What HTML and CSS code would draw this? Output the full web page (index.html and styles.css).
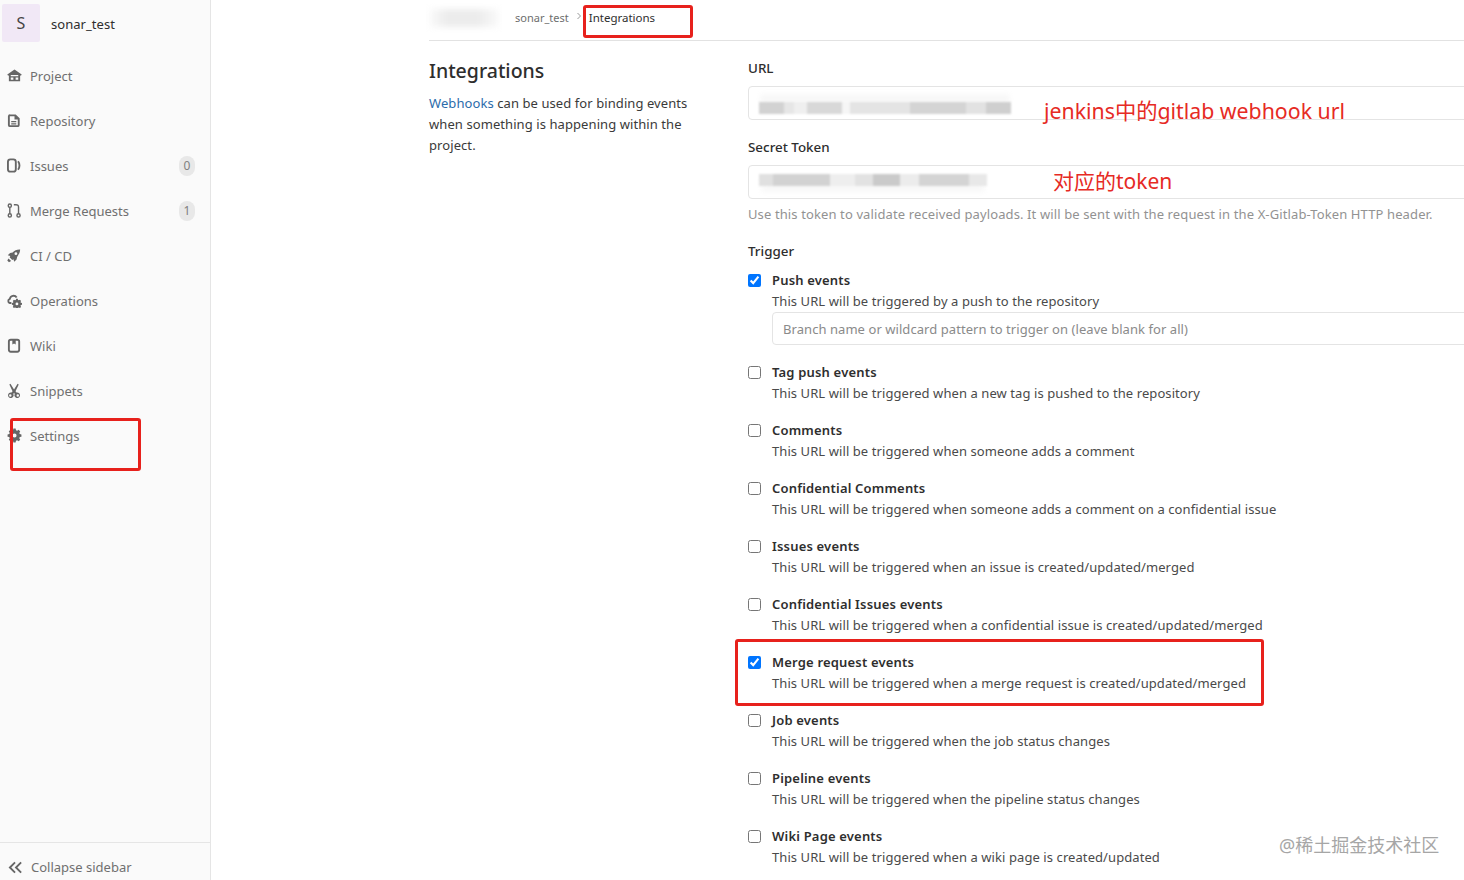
FILE: index.html
```html
<!DOCTYPE html>
<html lang="en">
<head>
<meta charset="utf-8">
<title>Integrations</title>
<link rel="stylesheet" href="styles.css">
</head>
<body>
<div class="page">
  <aside class="sidebar">
    <div class="brand">
      <div class="avatar">S</div>
      <div class="brand-name">sonar_test</div>
    </div>
    <nav class="nav">
      <a class="nav-item"><svg class="icon" viewBox="0 0 16 16"><path d="M8 1.500 0.300 6.800 1.200 8.300 2 7.800V14h12V7.800l.8.5.9-1.500L8 1.500zM4 7.400h8V8.900H4V7.400zM4 10.200h2.800v2.300H4v-2.300zm5.200 0H12v2.300H9.200v-2.300z" fill-rule="evenodd"/></svg><span>Project</span></a>
      <a class="nav-item"><svg class="icon" viewBox="0 0 16 16"><path d="M3.500 1.500h5.800L13.500 5.700V13a2.200 2.200 0 0 1-2.200 2H3.200A2.200 2.200 0 0 1 1 13V3.500a2.200 2.200 0 0 1 2.500-2zm-.5 2v9.500h8.500V6.800H8V3.500H3zM4.500 8.400h5.400v1.500H4.500V8.400zm0 2.400h5.400v1.500H4.500v-1.500z" fill-rule="evenodd"/></svg><span>Repository</span></a>
      <a class="nav-item"><svg class="icon" viewBox="0 0 16 16"><rect class="line" x="1" y="1.500" width="8.400" height="13" rx="2.600"/><path class="line" d="M11.800 3.500c2 2.500 2 6.500 0 9"/></svg><span>Issues</span><b class="count">0</b></a>
      <a class="nav-item"><svg class="icon" viewBox="0 0 16 16"><g class="thin"><circle cx="3" cy="2.800" r="1.700"/><circle cx="3" cy="13.200" r="1.700"/><circle cx="12.300" cy="13.200" r="1.700"/><path d="M3 4.500v7M12.300 11.500V4.500c0-1.700-1-2.700-2.700-2.700H7.300"/></g></svg><span>Merge Requests</span><b class="count">1</b></a>
      <a class="nav-item"><svg class="icon" viewBox="0 0 16 16"><path d="M14 1.500c-3.300-.2-6 .9-8 3.200L3.300 5.300.8 7.800l2.700.8-.7 1.300 2.800 2.800 1.300-.7.800 2.700 2.500-2.500.6-2.700C12.100 7.500 14.200 4.800 14 1.500zM9.500 4.500a1.500 1.500 0 1 1 0 3 1.500 1.500 0 0 1 0-3zM1.600 11.100l2.800 2.800-2.300 1.300-1.800-1.800 1.300-2.300z" fill-rule="evenodd"/></svg><span>CI / CD</span></a>
      <a class="nav-item"><svg class="icon" viewBox="0 0 16 16"><path class="line" d="M10.300 4.800A4 4 0 0 0 3 6.300 2.300 2.300 0 0 0 3 10.700h1.700"/><path d="M9.700 6.200h1.800l.3 1.200.9.400 1.100-.6 1.200 1.200-.6 1.100.4.900 1.200.3v1.800l-1.200.3-.4.900.6 1.100-1.200 1.200-1.100-.6-.9.400-.3 1.200H9.700l-.3-1.200-.9-.4-1.100.6-1.200-1.200.6-1.100-.4-.9-1.200-.3V10.700l1.200-.3.4-.9-.6-1.100 1.200-1.200 1.100.6.900-.4.300-1.200zM10.600 10.100a1.500 1.500 0 1 0 0 3 1.500 1.500 0 0 0 0-3z" fill-rule="evenodd"/></svg><span>Operations</span></a>
      <a class="nav-item"><svg class="icon" viewBox="0 0 16 16"><rect class="line" x="2" y="1.800" width="11" height="12.800" rx="2"/><path d="M5.700 1.500h3.600v5.500L7.500 5.800 5.700 7z"/></svg><span>Wiki</span></a>
      <a class="nav-item"><svg class="icon" viewBox="0 0 16 16"><path d="M3.700 .8 7.500 7 11.300 .8l1.200.9L9.100 8.800l1 1.400a3 3 0 1 1-1.800 1.400l-.8-1.300-.8 1.300a3 3 0 1 1-1.800-1.400l1-1.400L2.500 1.700 3.700 .8zM3.500 12a1.300 1.300 0 1 0 0 2.600 1.300 1.300 0 0 0 0-2.600zm8 0a1.300 1.300 0 1 0 0 2.600 1.300 1.300 0 0 0 0-2.600z" fill-rule="evenodd"/></svg><span>Snippets</span></a>
      <a class="nav-item"><svg class="icon" viewBox="0 0 16 16"><path d="M6.800 .6h2.400l.4 1.800 1.200.5 1.600-1 1.700 1.700-1 1.600.5 1.200 1.800.4v2.400l-1.800.4-.5 1.200 1 1.600-1.700 1.700-1.600-1-1.200.5-.4 1.800H6.800l-.4-1.800-1.200-.5-1.600 1-1.700-1.700 1-1.600-.5-1.200L.6 9.200V6.800l1.800-.4.5-1.200-1-1.600L3.600 1.900l1.600 1 1.200-.5.400-1.800zM8 5.800a2.200 2.200 0 1 0 0 4.400A2.200 2.200 0 0 0 8 5.800z" fill-rule="evenodd"/></svg><span>Settings</span></a>
    </nav>
    <div class="collapse">
      <svg class="collapse-icon" viewBox="0 0 16 16"><path d="M7.500 2.500 2 8l5.500 5.500M14 2.500 8.500 8l5.500 5.500"/></svg>
      <span>Collapse sidebar</span>
    </div>
  </aside>
  <main class="main">
    <div class="crumbs">
      <span class="blur blur-crumb"></span>
      <span class="crumb-link">sonar_test</span>
      <svg class="crumb-sep" viewBox="0 0 8 8"><path d="M2.500 1 5.500 4l-3 3"/></svg>
      <span class="crumb-current">Integrations</span>
    </div>
    <div class="columns">
      <section class="intro">
        <h1>Integrations</h1>
        <p><a class="link">Webhooks</a> can be used for binding events when something is happening within the project.</p>
      </section>
      <form class="form">
        <label class="field-label">URL</label>
        <div class="input input-url"><span class="blur blur-url"></span></div>
        <label class="field-label label-token">Secret Token</label>
        <div class="input input-token"><span class="blur blur-token"></span></div>
        <p class="help">Use this token to validate received payloads. It will be sent with the request in the X-Gitlab-Token HTTP header.</p>
        <label class="field-label label-trigger">Trigger</label>
        <div class="trigger trigger-push"><input type="checkbox" checked><div><strong>Push events</strong><p>This URL will be triggered by a push to the repository</p><input class="branch" type="text" placeholder="Branch name or wildcard pattern to trigger on (leave blank for all)"></div></div>
        <div class="trigger"><input type="checkbox"><div><strong>Tag push events</strong><p>This URL will be triggered when a new tag is pushed to the repository</p></div></div>
        <div class="trigger"><input type="checkbox"><div><strong>Comments</strong><p>This URL will be triggered when someone adds a comment</p></div></div>
        <div class="trigger"><input type="checkbox"><div><strong>Confidential Comments</strong><p>This URL will be triggered when someone adds a comment on a confidential issue</p></div></div>
        <div class="trigger"><input type="checkbox"><div><strong>Issues events</strong><p>This URL will be triggered when an issue is created/updated/merged</p></div></div>
        <div class="trigger"><input type="checkbox"><div><strong>Confidential Issues events</strong><p>This URL will be triggered when a confidential issue is created/updated/merged</p></div></div>
        <div class="trigger"><input type="checkbox" checked><div><strong>Merge request events</strong><p>This URL will be triggered when a merge request is created/updated/merged</p></div></div>
        <div class="trigger"><input type="checkbox"><div><strong>Job events</strong><p>This URL will be triggered when the job status changes</p></div></div>
        <div class="trigger"><input type="checkbox"><div><strong>Pipeline events</strong><p>This URL will be triggered when the pipeline status changes</p></div></div>
        <div class="trigger"><input type="checkbox"><div><strong>Wiki Page events</strong><p>This URL will be triggered when a wiki page is created/updated</p></div></div>
      </form>
    </div>
  </main>
  <div class="mark mark-settings"></div>
  <div class="mark mark-crumb"></div>
  <div class="mark mark-merge"></div>
  <div class="note note-url">jenkins中的gitlab webhook url</div>
  <div class="note note-token">对应的token</div>
  <div class="watermark">@稀土掘金技术社区</div>
</div>
</body>
</html>
```
FILE: styles.css
```css
* { box-sizing: border-box; }
html, body { margin: 0; height: 100%; overflow: hidden; background: #fff; }
body { font-family: "Noto Sans", "Noto Sans CJK SC", sans-serif; font-size: 14px; color: #2e2e2e; }
.page { position: relative; display: flex; width: 1464px; height: 880px; overflow: hidden; }

.sidebar { flex: none; width: 211px; height: 880px; display: flex; flex-direction: column; background: #fafafa; border-right: 1px solid #e5e5e5; }
.brand { flex: none; height: 53px; display: flex; align-items: flex-start; padding: 4px 0 0 2px; }
.avatar { width: 38px; height: 38px; display: flex; align-items: center; justify-content: center; background: #f1e8f6; color: #444; font-size: 16px; border-radius: 2px; }
.brand-name { margin: 10px 0 0 11px; font-size: 13px; letter-spacing: .05px; line-height: 20px; color: #2e2e2e; }
.nav { flex: 1; display: flex; flex-direction: column; }
.nav-item { height: 45px; display: flex; align-items: center; padding: 0 15px 0 7px; color: #707070; font-size: 13px; }
.icon { flex: none; width: 15px; height: 15px; margin-right: 8px; fill: #666; }
.line { fill: none; stroke: #666; stroke-width: 2; }
.thin { fill: none; stroke: #666; stroke-width: 1.500; }
.count { margin-left: auto; width: 16px; height: 20px; display: flex; align-items: center; justify-content: center; border-radius: 8px; background: #e8e8e8; color: #808080; font-size: 12px; font-weight: 400; }
.collapse { flex: none; height: 38px; border-top: 1px solid #e5e5e5; display: flex; align-items: center; padding: 11px 0 0 8px; color: #707070; font-size: 13px; }
.collapse-icon { width: 15px; height: 15px; margin-right: 8px; fill: none; stroke: #666; stroke-width: 2; }

.main { flex: 1; min-width: 0; padding-left: 218px; }
.crumbs { height: 41px; display: flex; align-items: flex-start; border-bottom: 1px solid #e2e2e2; padding-top: 9px; font-size: 11px; line-height: 18px; color: #6e6e6e; }
.blur { display: block; }
.blur-crumb { width: 70px; height: 18px; margin: 0 16px 0 0; background: linear-gradient(90deg, #fbfbfb, #ececec 25% 70%, #fafafa); filter: blur(3px); }
.crumb-sep { width: 8px; height: 8px; margin: 3px 6px 0 6px; fill: none; stroke: #999; stroke-width: 1; }
.crumb-current { color: #2e2e2e; font-size: 11.500px; }

.columns { display: flex; }
.intro { flex: none; width: 319px; padding-top: 15px; }
h1 { margin: 0 0 7px; font-size: 19.500px; font-weight: 500; line-height: 30px; color: #2e2e2e; }
.intro p { margin: 0; width: 265px; font-size: 13px; letter-spacing: .08px; line-height: 21px; color: #3a3a3a; }
.link { color: #2b6cab; }

.form { flex: 1; min-width: 0; margin-right: -20px; padding-top: 17px; }
.field-label { display: block; font-size: 13.400px; line-height: 20px; font-weight: 500; color: #2e2e2e; margin-bottom: 8px; }
.input { height: 34px; border: 1px solid #e4e4e4; border-radius: 4px; padding-left: 10px; }
.input-url { padding-top: 15px; }
.input-token { padding-top: 8px; }
.blur-url { width: 252px; height: 12px; filter: blur(1px); box-shadow: 0 -9px 5px -1px #f8f8f8; background: linear-gradient(90deg, #d2d2d2 0 10%, #e6e6e6 10% 14%, #efefef 14% 19%, #d8d8d8 19% 33%, #f6f6f6 33% 36%, #e4e4e4 36% 60%, #d4d4d4 60% 82%, #e2e2e2 82% 90%, #cfcfcf 90% 100%); }
.blur-token { width: 228px; height: 12px; filter: blur(1px); box-shadow: 0 8px 5px -2px #f8f8f8; background: linear-gradient(90deg, #e0e0e0 0 6%, #d2d2d2 6% 31%, #eeeeee 31% 42%, #e2e2e2 42% 50%, #cacaca 50% 62%, #ececec 62% 70%, #d4d4d4 70% 92%, #e8e8e8 92% 100%); }
.label-token { margin-top: 17px; }
.help { margin: 5px 0 0; font-size: 13px; letter-spacing: .115px; line-height: 20px; color: #929292; }
.label-trigger { margin-top: 17px; margin-bottom: 9px; }

.trigger { display: flex; margin-bottom: 16px; }
.trigger-push { margin-bottom: 17px; }
.trigger input[type="checkbox"] { flex: none; margin: 4px 11px 0 0; width: 13px; height: 13px; }
.trigger > div { flex: 1; min-width: 0; }
.trigger strong { display: block; font-size: 13px; letter-spacing: .18px; line-height: 21px; font-weight: 600; color: #2e2e2e; }
.trigger p { margin: 0; font-size: 13px; letter-spacing: .08px; line-height: 21px; color: #4a4a4a; }
.branch { display: block; width: 100%; height: 33px; margin-top: 0; padding: 0 10px; border: 1px solid #e4e4e4; border-radius: 4px; font: inherit; font-size: 13px; letter-spacing: .06px; }
.branch::placeholder { color: #8a8a8a; opacity: 1; }

.mark { position: absolute; border: 3px solid #e7211c; border-radius: 3px; }
.mark-settings { left: 10px; top: 418px; width: 131px; height: 53px; }
.mark-crumb { left: 583px; top: 5px; width: 110px; height: 33px; }
.mark-merge { left: 735px; top: 639px; width: 529px; height: 67px; }
.note { position: absolute; line-height: 30px; color: #e62a24; white-space: nowrap; }
.note-url { left: 1044px; top: 96px; font-size: 21.300px; }
.note-token { left: 1053px; top: 166px; font-size: 21px; }
.watermark { position: absolute; left: 1279px; top: 832px; font-size: 18px; line-height: 26px; color: #a6a6a6; white-space: nowrap; }
```
